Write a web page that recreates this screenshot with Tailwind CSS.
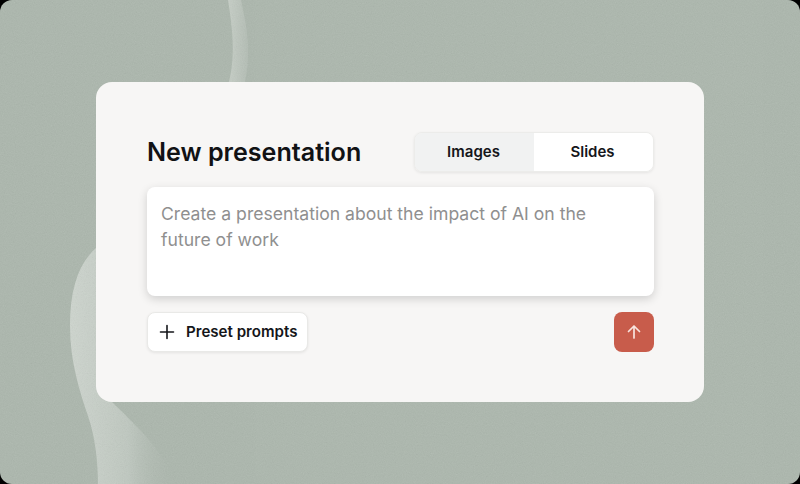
<!DOCTYPE html>
<html lang="en">
<head>
    <meta charset="UTF-8">
    <title>New presentation</title>
    <script src="https://cdn.jsdelivr.net/npm/@tailwindcss/browser@4"></script>
</head>
<body class="bg-black font-['Inter',sans-serif]">
    <div class="relative w-[800px] h-[484px] overflow-hidden rounded-xl bg-[#acb7ad] flex items-center justify-center">
        <!-- ribbon and grain behind the card -->
        <svg class="absolute inset-0" width="800" height="484" viewBox="0 0 800 484" fill="none">
            <defs>
                <linearGradient id="ribbon" x1="0" y1="0" x2="1" y2="0">
                    <stop offset="0" stop-color="#ced5ce"/>
                    <stop offset="0.55" stop-color="#bfc8c0"/>
                    <stop offset="1" stop-color="#adb7ae" stop-opacity="0"/>
                </linearGradient>
                <linearGradient id="ribbonTop" x1="0" y1="0" x2="1" y2="0">
                    <stop offset="0" stop-color="#c6cec6"/>
                    <stop offset="1" stop-color="#b3bdb4"/>
                </linearGradient>
                <filter id="grain">
                    <feTurbulence type="fractalNoise" baseFrequency="0.9" numOctaves="2" seed="4"/>
                    <feColorMatrix type="saturate" values="0"/>
                </filter>
            </defs>
            <path d="M228 0C232 26 236 54 229 82H245C252 50 246 24 241 0Z" fill="url(#ribbonTop)"/>
            <path d="M96 248C78 264 70 290 70 326C70 362 80 392 88 416C95 436 98 462 98 484H175C165 450 130 420 112 402L96 380Z" fill="url(#ribbon)"/>
            <rect width="800" height="484" filter="url(#grain)" opacity="0.14"/>
        </svg>

        <div class="relative w-[608px] h-[320px] rounded-2xl bg-[#f7f6f5] pl-[51px] pr-[50px] pt-[50px]">
            <div class="flex items-center justify-between">
                <h1 class="text-[25.1px] leading-10 font-semibold text-[#111214]">New presentation</h1>
                <div class="flex w-[240px] h-10 overflow-hidden rounded-lg border border-[#ececea] text-[15px] font-semibold text-[#15161a] shadow-[0_1px_3px_rgba(0,0,0,0.08)]">
                    <div class="w-[119px] flex items-center justify-center pr-[2px] bg-[#f1f2f2]">Images</div>
                    <div class="flex-1 flex items-center justify-center pr-[2px] bg-white">Slides</div>
                </div>
            </div>

            <div class="mt-[15px] h-[109px] rounded-lg bg-white px-[14px] pt-[14px] text-[17.6px] leading-[26px] text-[#8f8f8f] shadow-[0_3px_10px_rgba(0,0,0,0.16)]">
                Create a presentation about the impact of AI on the future of work
            </div>

            <div class="mt-[16px] flex items-center justify-between">
                <div class="flex items-center gap-[11px] w-[161px] h-10 rounded-lg border border-[#e9e9e7] bg-white pl-[11px] text-[15.1px] font-semibold text-[#15161a] shadow-[0_1px_3px_rgba(0,0,0,0.08)]">
                    <svg width="16" height="16" viewBox="0 0 16 16" fill="none" stroke="#15161a" stroke-width="1.6" stroke-linecap="round">
                        <path d="M8 1.5V14.5M1.5 8H14.5"/>
                    </svg>
                    <span>Preset prompts</span>
                </div>
                <div class="flex items-center justify-center w-10 h-10 rounded-lg bg-[#c85c4b]">
                    <svg width="16" height="16" viewBox="0 0 16 16" fill="none" stroke="#f8e4df" stroke-width="1.7" stroke-linecap="round" stroke-linejoin="round">
                        <path d="M8 14V2M2.5 7.5L8 2L13.5 7.5"/>
                    </svg>
                </div>
            </div>
        </div>
    </div>
</body>
</html>
